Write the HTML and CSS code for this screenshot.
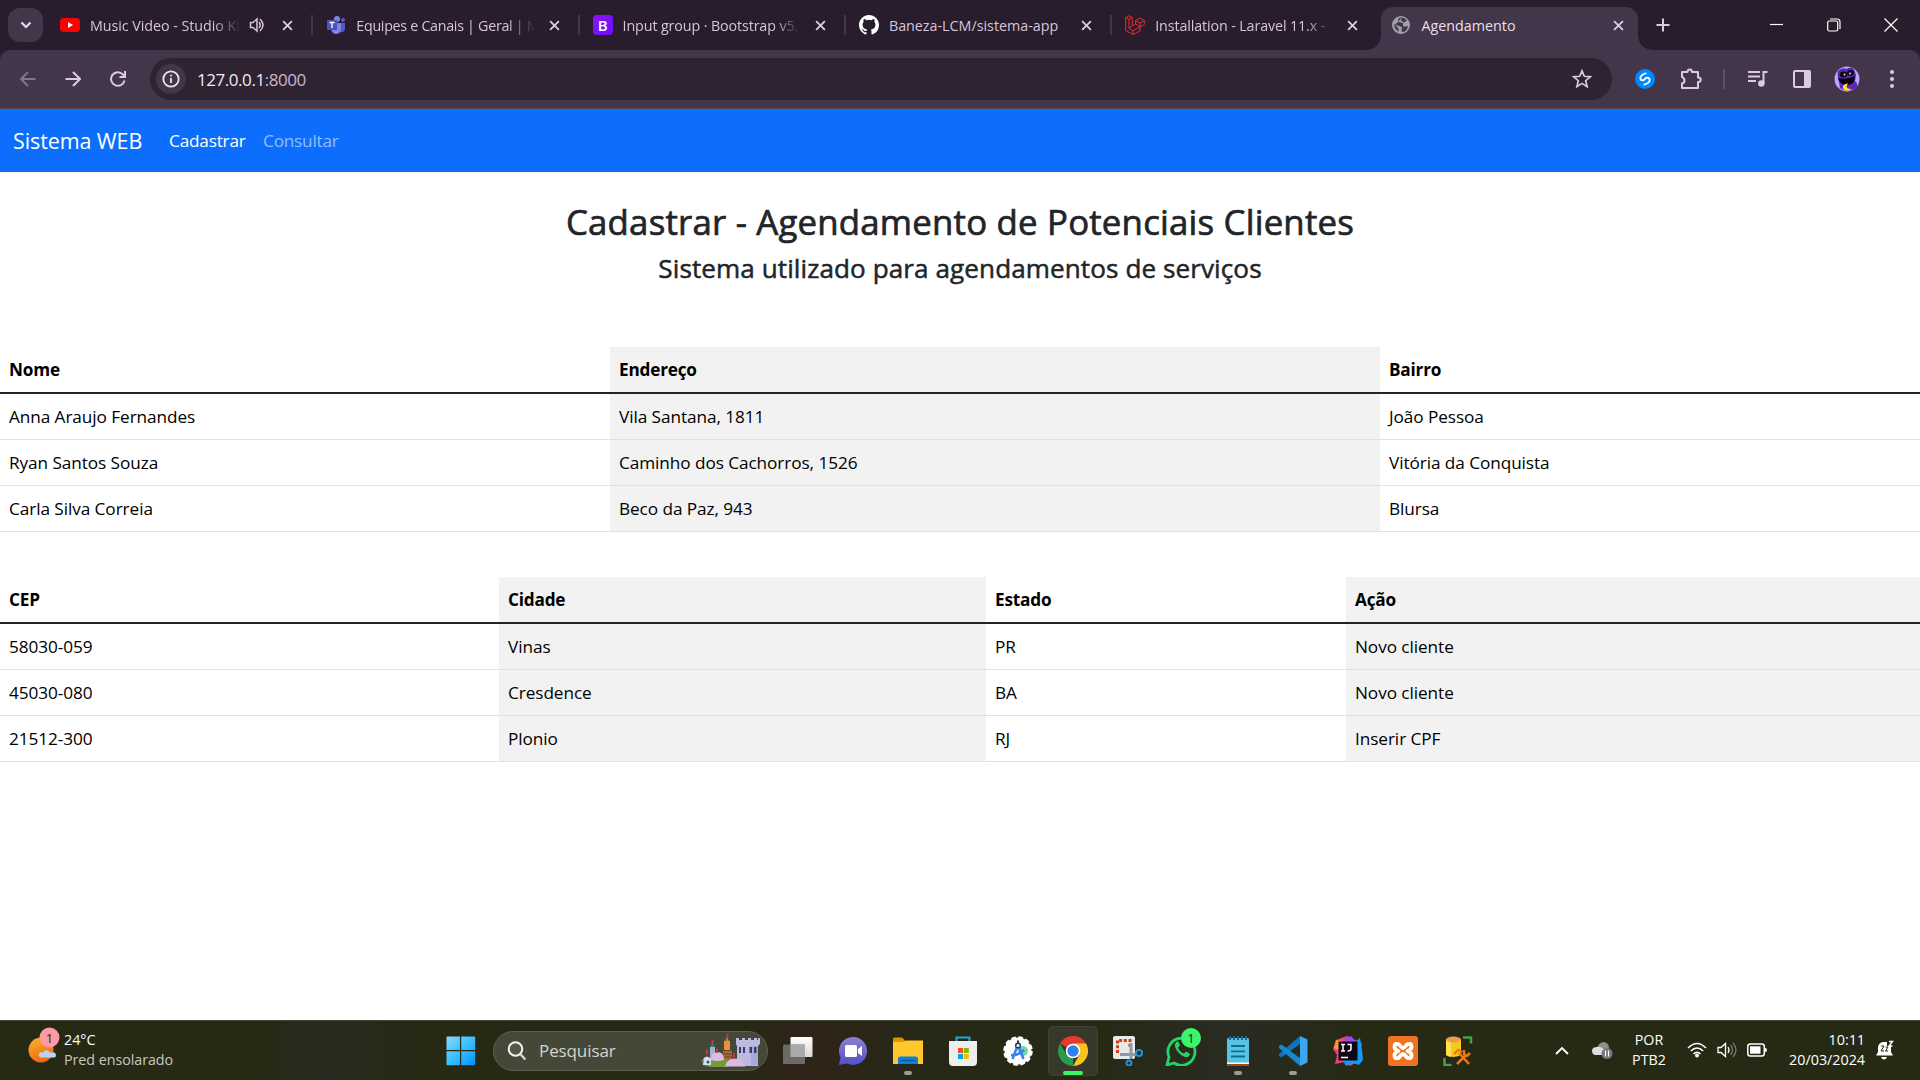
FILE: index.html
```html
<!DOCTYPE html>
<html lang="pt-BR">
<head>
<meta charset="utf-8">
<title>Agendamento</title>
<link rel="stylesheet" href="styles.css">
</head>
<body>
<div class="screen">
  <header class="tabstrip">
    <button class="tab-search"><svg width="12" height="8" viewBox="0 0 12 8"><path d="M1.5 1.5 6 6l4.500-4.500" fill="none" stroke="#e6d9ea" stroke-width="2.200"/></svg></button>
    <div class="tabs">
      <div class="tab">
        <svg class="fav" viewBox="0 0 20 20"><rect y="3" width="20" height="14" rx="4" fill="#f00"/><path d="M8 7v6l5-3z" fill="#fff"/></svg>
        <span class="tab-title short">Music Video - Studio Ki</span>
        <svg class="audio" viewBox="0 0 16 16"><path d="M1.500 5.500v5H4l4 3.500V2L4 5.500z" fill="none" stroke="#d6c5da" stroke-width="1.500"/><path d="M10 5q2.500 3 0 6M11 2q6 6 0 12" fill="none" stroke="#d6c5da" stroke-width="1.500"/></svg>
        <svg class="close" viewBox="0 0 10 10"><path d="m1 1 8 8M9 1 1 9"/></svg>
      </div>
      <div class="tab">
        <svg class="fav" viewBox="0 0 20 20"><circle cx="11" cy="4" r="3" fill="#7b83eb"/><circle cx="17" cy="5" r="2" fill="#5059c9"/><path d="M13 8h6v6q-1 4-5 3z" fill="#5059c9"/><path d="M5 8h10v7q-1 4-5 4t-5-5z" fill="#7b83eb"/><rect x="1" y="5" width="10" height="10" rx="1" fill="#4b53bc"/><path d="M3.500 7.500h5M6 7.500V13" stroke="#fff" stroke-width="1.300"/></svg>
        <span class="tab-title tight">Equipes e Canais | Geral | M</span>
        <svg class="close" viewBox="0 0 10 10"><path d="m1 1 8 8M9 1 1 9"/></svg>
      </div>
      <div class="tab">
        <span class="fav boot">B</span>
        <span class="tab-title">Input group · Bootstrap v5.</span>
        <svg class="close" viewBox="0 0 10 10"><path d="m1 1 8 8M9 1 1 9"/></svg>
      </div>
      <div class="tab">
        <svg class="fav" viewBox="0 0 16 16"><path fill="#fff" d="M8 0C3.580 0 0 3.580 0 8c0 3.540 2.290 6.530 5.470 7.590.4.070.550-.170.550-.380 0-.190-.010-.820-.010-1.490-2.010.370-2.530-.490-2.690-.940-.090-.230-.480-.940-.820-1.130-.280-.150-.680-.520-.010-.530.630-.010 1.080.580 1.230.820.720 1.210 1.870.870 2.330.660.070-.520.280-.870.510-1.070-1.780-.200-3.640-.890-3.640-3.950 0-.870.310-1.590.820-2.150-.080-.200-.360-1.020.080-2.120 0 0 .670-.210 2.200.820a7.500 7.500 0 0 1 4 0c1.530-1.040 2.200-.820 2.200-.820.440 1.100.160 1.920.080 2.120.510.560.820 1.270.820 2.150 0 3.070-1.870 3.750-3.650 3.950.290.250.540.730.540 1.480 0 1.070-.010 1.930-.010 2.200 0 .210.150.460.550.380A8.010 8.010 0 0 0 16 8c0-4.420-3.580-8-8-8"/></svg>
        <span class="tab-title whole">Baneza-LCM/sistema-app</span>
        <svg class="close" viewBox="0 0 10 10"><path d="m1 1 8 8M9 1 1 9"/></svg>
      </div>
      <div class="tab">
        <svg class="fav" viewBox="0 0 20 20" fill="none" stroke="#e0302a" stroke-width="1"><path d="M.700 2.500 4 .700l3.300 1.800v8.300l3.300-1.900V5.500L15 3l4.300 2.500v4L15 12v4l-7 3.500-7.300-4zM.700 2.500 4 4.300l3.300-1.800M4 4.300v9.200l4 2.300 7-4M8 15.800v3.700M10.600 5.500 15 8l4.300-2.500M15 8v4M10.600 9 15 12M4 13.500l3.300-2.700"/></svg>
        <span class="tab-title">Installation - Laravel 11.x -</span>
        <svg class="close" viewBox="0 0 10 10"><path d="m1 1 8 8M9 1 1 9"/></svg>
      </div>
      <div class="tab active">
        <svg class="fav" viewBox="0 0 20 20"><circle cx="10" cy="10" r="9" fill="#9aa0a6"/><path d="M11 2.500q-4 0-4 2.500t3 2.500 2 2.500 5 1q-1 6-6 6-1-2 0-3.500T8 11 3 9q0 5 4.500 7.500v-3L4 10M11 2.500q3 .500 5 3l-3 2-3-2z" fill="#43364a"/></svg>
        <span class="tab-title whole">Agendamento</span>
        <svg class="close" viewBox="0 0 10 10"><path d="m1 1 8 8M9 1 1 9"/></svg>
      </div>
    </div>
    <svg class="new-tab" viewBox="0 0 14 14"><path d="M7 .500v13M.500 7h13" stroke="#dccbe0" stroke-width="2"/></svg>
    <div class="window-controls">
      <svg viewBox="0 0 14 14"><path d="M0 6.500h13"/></svg>
      <svg viewBox="0 0 14 14"><rect x=".700" y="3" width="10" height="10" rx="1.500"/><path d="M3 1h7q3 0 3 3v7"/></svg>
      <svg viewBox="0 0 14 14"><path d="m.500.500 13 13M13.500.500l-13 13"/></svg>
    </div>
  </header>

  <div class="toolbar-back">
  <div class="toolbar">
    <div class="nav-buttons">
      <svg viewBox="0 0 16 16" stroke="#83758a"><path d="M15.500 8H1.500M8 1 1 8l7 7"/></svg>
      <svg viewBox="0 0 16 16" stroke="#dccbe0"><path d="M.500 8h14M8 1l7 7-7 7"/></svg>
      <svg viewBox="0 0 16 16" stroke="#dccbe0"><path d="M14.500 9.500A6.800 6.800 0 1 1 13 3.500l1.500 2M15 0v6H9.500"/></svg>
    </div>
    <div class="omnibox">
      <span class="site-info"><svg width="18" height="18" viewBox="0 0 18 18"><circle cx="9" cy="9" r="7.700" fill="none" stroke="#efe3f2" stroke-width="1.800"/><path d="M9 8v5M9 4.800v1.800" stroke="#efe3f2" stroke-width="1.800"/></svg></span>
      <span class="url"><b>127.0.0.1</b>:8000</span>
      <svg class="star" viewBox="0 0 20 20"><path d="m10 1.800 2.300 5.500 6 .500-4.600 3.900 1.400 5.900-5.100-3.200-5.100 3.200 1.400-5.900L1.700 7.800l6-.500z" fill="none" stroke="#dccbe0" stroke-width="1.700"/></svg>
    </div>
    <div class="extensions">
      <svg class="shazam" width="20" height="20" viewBox="0 0 20 20"><circle cx="10" cy="10" r="10" fill="#08f"/><path d="M10.800 4.300Q5.500 6 5.300 8.700 5.300 11.300 8 11.300q1.700-.300 2.800-2.200M9.200 15.700q5.300-1.700 5.500-4.400 0-2.600-2.700-2.600-1.700.300-2.800 2.200" fill="none" stroke="#fff" stroke-width="1.800" stroke-linecap="round"/></svg>
      <svg class="puzzle" width="22" height="22" viewBox="0 0 22 22"><path d="M2 4h5.500q0-2.500 2.200-2.500T12 4h6v5.500q2.700 0 2.700 2.300T18 14v6H2v-4.500q2.500-.500 2.500-3T2 9z" fill="none" stroke="#dccbe0" stroke-width="2" stroke-linejoin="round"/></svg>
      <span class="divider"></span>
      <svg class="media" width="22" height="18" viewBox="0 0 22 18"><path d="M1 2h12M1 6.500h12M1 11h8M20.500 2H16.500v12" fill="none" stroke="#dccbe0" stroke-width="2"/><circle cx="14.300" cy="13.500" r="3.200" fill="#dccbe0"/></svg>
      <svg class="panel" width="20" height="20" viewBox="0 0 20 20"><rect x="2" y="2" width="16" height="16" rx="1" fill="none" stroke="#dccbe0" stroke-width="2"/><path d="M12 2h6v16h-6z" fill="#dccbe0"/></svg>
      <svg class="avatar" width="26" height="26" viewBox="0 0 26 26"><circle cx="13" cy="13" r="12.500" fill="#c3a2fa"/><path d="M4 5q4-4 8-2 5-3 8 0l2 6-1 6q3 2 2 6-9 7-17 1l-1-6Q3 11 4 5z" fill="#5a28b8"/><ellipse cx="9.500" cy="8.500" rx="3.800" ry="3" fill="#100819"/><ellipse cx="16.500" cy="7" rx="3.500" ry="3" fill="#100819"/><circle cx="10.500" cy="8.500" r="1" fill="#ddd"/><circle cx="16" cy="7.500" r="1" fill="#ddd"/><path d="M4 12q9 2 17-2 0 9-8 9-7 0-9-7z" fill="#05010a"/><path d="M13 17.500q-5 1-4 5 2 3 6 2 2-1 2-2-3 1-4-1t1-4z" fill="#ffe119"/></svg>
      <svg class="dots" width="6" height="20" viewBox="0 0 6 20" fill="#dccbe0"><circle cx="3" cy="3" r="2"/><circle cx="3" cy="10" r="2"/><circle cx="3" cy="17" r="2"/></svg>
    </div>
  </div>
  </div>

  <main class="page">
    <nav class="navbar">
      <a class="brand">Sistema WEB</a>
      <a class="nav-link">Cadastrar</a>
      <a class="nav-link muted">Consultar</a>
    </nav>
    <section class="titles">
      <h1>Cadastrar - Agendamento de Potenciais Clientes</h1>
      <h2>Sistema utilizado para agendamentos de serviços</h2>
    </section>
    <table class="table clients">
      <colgroup><col class="c-name"><col class="c-address"><col></colgroup>
      <thead><tr><th>Nome</th><th>Endereço</th><th>Bairro</th></tr></thead>
      <tbody>
        <tr><td>Anna Araujo Fernandes</td><td>Vila Santana, 1811</td><td>João Pessoa</td></tr>
        <tr><td>Ryan Santos Souza</td><td>Caminho dos Cachorros, 1526</td><td>Vitória da Conquista</td></tr>
        <tr><td>Carla Silva Correia</td><td>Beco da Paz, 943</td><td>Blursa</td></tr>
      </tbody>
    </table>
    <table class="table places">
      <colgroup><col class="c-cep"><col class="c-city"><col class="c-state"><col></colgroup>
      <thead><tr><th>CEP</th><th>Cidade</th><th>Estado</th><th>Ação</th></tr></thead>
      <tbody>
        <tr><td>58030-059</td><td>Vinas</td><td>PR</td><td>Novo cliente</td></tr>
        <tr><td>45030-080</td><td>Cresdence</td><td>BA</td><td>Novo cliente</td></tr>
        <tr><td>21512-300</td><td>Plonio</td><td>RJ</td><td>Inserir CPF</td></tr>
      </tbody>
    </table>
  </main>

  <footer class="taskbar">
    <div class="weather">
      <svg width="34" height="38" viewBox="0 0 34 38"><defs><linearGradient id="sun" x2=".4" y2="1"><stop stop-color="#f8b62c"/><stop offset="1" stop-color="#f06a10"/></linearGradient></defs><circle cx="14" cy="23" r="12.500" fill="url(#sun)"/><path d="M14 30.500q-3-1-2-4 2-2 4-1 3-5 7 0 6-1 6 3 0 2-3 2z" fill="#b9d3f8"/><circle cx="22.500" cy="10.500" r="10" fill="#ff99a4"/><text x="22.500" y="15.500" text-anchor="middle" class="badge-text">1</text></svg>
      <div class="weather-text"><span>24°C</span><span class="dim">Pred ensolarado</span></div>
    </div>
    <div class="apps">
      <svg class="start" width="30" height="30" viewBox="0 0 30 30"><defs><linearGradient id="win" x2="1" y2="1"><stop stop-color="#83dcff"/><stop offset=".5" stop-color="#3cc0ff"/><stop offset="1" stop-color="#0090ff"/></linearGradient></defs><path d="M.500 1.500q0-1 1-1H14V14H.500zM15.200.500h13q1 0 1 1V14h-14zM.500 15.200H14v14H1.500q-1 0-1-1zM15.200 15.200h14v13q0 1-1 1h-13z" fill="url(#win)"/></svg>
      <div class="search">
        <svg class="lens" width="20" height="20" viewBox="0 0 20 20"><circle cx="8.500" cy="8" r="6.800" fill="#555847" stroke="#f2f2f2" stroke-width="2"/><path d="m13.300 13 5 5.500" stroke="#ddd" stroke-width="2.200"/></svg>
        <span>Pesquisar</span>
        <svg class="castle" width="60" height="34" viewBox="0 0 60 34"><path d="M9 13h5v14H9z" fill="#9fb6cf"/><path d="m9 13 2.500-4 2.500 4z" fill="#4a6b90"/><path d="M22 16h9v10h-9z" fill="#a46a3c"/><path d="M23 7h6v9h-6z" fill="#e0953c"/><path d="m24 7 2-4 2 4z" fill="#c97a35"/><path d="M22 16.500h9M22 20h9M22 23h9" stroke="#6d3d2c"/><path d="M2 31q8-7 20-6 9 0 10 6l-8 2H9z" fill="#779b37"/><path d="M10 26q0-8 6.500-8t6.500 8q-6 2-13 0z" fill="#d9bde4"/><path d="M2 31v-6q4-5 8 0v6z" fill="#d5e1ed"/><path d="M0 27l3-2v4z" fill="#7ca83e"/><path d="M35 4h3v2h3V4h3v2h3V4h3v2h3V4h3v2h1V4h2v6l-2 2v20H36V12l-1-2z" fill="#bdb9e0"/><path d="M50 12h7v19h-7z" fill="#aaa8da"/><path d="M38 13h2v6h-2zM42 13h2v6h-2zM48.500 13h2.500v6h-2.500zM53 13h2.500v6H53z" fill="#34406a"/><path d="M24 32.500q2-8 10-8t10 8z" fill="#d9bbe2"/><path d="M11.500 6v4M26.500 0v4M6 15.500v5M16 15v4M33 19v6" stroke="#c93450" stroke-width="2"/><circle cx="7" cy="28" r="1.500" fill="#285870"/></svg>
      </div>
      <div class="app"><svg viewBox="0 0 30 30"><defs><linearGradient id="tv" x2="0" y2="1"><stop stop-color="#fff"/><stop offset="1" stop-color="#d8d8d8"/></linearGradient></defs><rect x="7.500" y="1" width="22" height="20" rx="1" fill="url(#tv)"/><rect y="8.500" width="22" height="19.500" rx="1" fill="#777" fill-opacity=".85"/><path d="M7.500 8.500H22V21H7.500z" fill="#aaa"/></svg></div>
      <div class="app"><svg viewBox="0 0 30 30"><defs><linearGradient id="chat" x2="0" y2="1"><stop stop-color="#8d81cf"/><stop offset="1" stop-color="#4f52c8"/></linearGradient></defs><path d="M15 1a14 14 0 1 1-6 26.600L1 29l1.500-7.500A14 14 0 0 1 15 1z" fill="url(#chat)"/><rect x="7" y="9" width="12" height="12" rx="1.500" fill="#fff"/><path d="m20 13 4-3v10l-4-3z" fill="#fff"/></svg></div>
      <div class="app"><svg viewBox="0 0 30 30"><path d="M0 3q0-1.500 1.500-1.500H9l3 3V8H0z" fill="#dc9600"/><path d="M0 6h10l3-1.500h17V28H0z" fill="#ffc62e"/><path d="M5 28v-5q0-2.500 2.500-2.500h15q2.500 0 2.500 2.500v5z" fill="#0e7fd6"/><path d="M8 24.500h14" stroke="#07529a"/></svg><i class="run"></i></div>
      <div class="app"><svg viewBox="0 0 30 30"><path d="M8.500 7V1.500h13V7" fill="none" stroke="#1fa8e0" stroke-width="2"/><path d="M1 5h28v21q0 4-4 4H5q-4 0-4-4z" fill="#eee"/><path d="M10 12h5v5h-5z" fill="#f25022"/><path d="M15.800 12h5v5h-5z" fill="#7fba00"/><path d="M10 18h5v5h-5z" fill="#00a4ef"/><path d="M15.800 18h5v5h-5z" fill="#ffb900"/></svg></div>
      <div class="app"><svg viewBox="0 0 30 30"><circle cx="15" cy="15" r="13.500" fill="#fff"/><circle cx="15" cy="15" r="13.500" fill="none" stroke="#fff" stroke-width="2.500" stroke-dasharray="4.500 2.570"/><circle cx="20" cy="15" r="5" fill="#6fdc9c"/><path d="m14.500 10-5 13M15.500 10l5 13M8 19q7 1 13-5" fill="none" stroke="#3f7fee" stroke-width="2.600"/><circle cx="15" cy="9.500" r="2.300" fill="#fff" stroke="#203a5c" stroke-width="1.500"/><path d="M15 4.500v3" stroke="#203a5c" stroke-width="2"/></svg></div>
      <div class="app current"><svg viewBox="0 0 30 30"><path d="M15 15 2.010 7.500A15 15 0 0 1 28 7.500z" fill="#e33b2e"/><path d="M2.010 7.500 8.500 18.800l6.500 3.700L15 30A15 15 0 0 1 2.010 7.500z" fill="#2b9a4a"/><path d="m21.500 18.800-6.500 11.200A15 15 0 0 0 28 7.500H15z" fill="#fcc31e"/><circle cx="15" cy="15" r="7.300" fill="#fff"/><circle cx="15" cy="15" r="5.700" fill="#2f7ff0"/></svg><i class="run on"></i></div>
      <div class="app"><svg viewBox="0 0 30 30"><rect y="0" width="22" height="23" rx="2" fill="#e9e9e9"/><path d="M4.500 17V4.500H17V11" fill="none" stroke="#d83b10" stroke-width="3" stroke-dasharray="3 1.700"/><path d="M18 7v16M7 18.500h16" stroke="#8d9aa8" stroke-width="3"/><circle cx="26" cy="17" r="3" fill="none" stroke="#1e93dc" stroke-width="2"/><circle cx="16" cy="27" r="2.500" fill="none" stroke="#1e93dc" stroke-width="2"/></svg></div>
      <div class="app wide"><svg width="38" height="38" viewBox="0 0 38 38"><path d="M3 37l2-8A13.500 13.500 0 1 1 10 35z" fill="none" stroke="#25d366" stroke-width="2.800"/><path d="M11 16q-1 3 3 8 5 6 10 5 3-2 1-4l-3-1.500-2 2q-4-1-6-6l2-2-1.500-4Q12 13 11 16z" fill="#25d366"/><circle cx="27" cy="10" r="10" fill="#3bf56b"/><text x="27" y="15" text-anchor="middle" class="badge-text">1</text></svg></div>
      <div class="app"><svg viewBox="0 0 30 30"><rect x="4" y="2" width="22" height="28" rx="1.500" fill="#58c4e4"/><path d="M4 26.500h22V28H4z" fill="#fff"/><path d="M4 28h22v2H4z" fill="#a44a12"/><path d="M7 0v4M11 0v4M15 0v4M19 0v4M23 0v4" stroke="#176a94" stroke-width="2"/><path d="M8 10h14M8 15.300h14M8 20.500h14" stroke="#0b6f98" stroke-width="1.800"/></svg><i class="run"></i></div>
      <div class="app"><svg viewBox="0 0 30 30"><path d="M22 8 3.500 21.500 1 20v-2L22 0z" fill="#0f72bb"/><path d="M22 22 3.500 8.500 1 10v2l21 18z" fill="#1787d0"/><path d="m22 0 7.500 3.500v23L22 30z" fill="#3ba7ef"/></svg><i class="run"></i></div>
      <div class="app"><svg viewBox="0 0 30 30"><path d="M3 4 14 0l8 4 7 3-2 9 2 7-12 7-5-4-10 2 2-9-4-6z" fill="#f33d83"/><path d="m22 6 5-4 2 12 1 10-4 5-6-2-7 3-3-5z" fill="#1599f2"/><path d="M3 4l7 1-5 9-4-2z" fill="#fb9b27"/><path d="M12 2l6-2 4 5H12z" fill="#8f4df0"/><rect x="5.500" y="5.500" width="19" height="19" fill="#100816"/><path d="M8 8.500h4M10 8.500V15M8 15h4M14.500 8.500H18V13q0 2-3.500 2M8 21.500h7" fill="none" stroke="#fff" stroke-width="1.500"/></svg></div>
      <div class="app"><svg viewBox="0 0 30 30"><rect width="30" height="30" rx="3" fill="#f07322"/><path d="M11 8.500Q7 6.500 6.500 10t4 5q-4.500 1.500-4 5t4.500 1.500Q14 18 15 18t4 3.500q4 2 4.500-1.500t-4-5q4.500-1.500 4-5T19 8.500Q16 12 15 12t-4-3.500z" fill="none" stroke="#fff" stroke-width="3.800" stroke-linejoin="round"/></svg></div>
      <div class="app"><svg viewBox="0 0 30 30"><path d="M3 3v16q7 4 15 0V3z" fill="#f7c918"/><path d="M3 3v16q2 1.500 5 1.800V3z" fill="#ffe04d"/><ellipse cx="10.500" cy="3.500" rx="7.500" ry="3" fill="#ec9f4a"/><path d="M20 1.500h8v6M1.500 22v7h7" fill="none" stroke="#46a049" stroke-width="2.500"/><path d="m14 28 9-9M16 17l10 11M11 18l4-4 4 2M21 14v4l3 2 3-3" fill="none" stroke="#ef7a12" stroke-width="2.500"/></svg></div>
    </div>
    <div class="tray">
      <svg width="14" height="9" viewBox="0 0 14 9"><path d="m1 8 6-6 6 6" fill="none" stroke="#fff" stroke-width="1.800"/></svg>
      <svg class="cloud" width="21" height="18" viewBox="0 0 21 18"><path d="M5 7q2-6 7-6 5 1 5 6l-2 6H5z" fill="#8c8e85"/><path d="M0 10q0-4 5-4 4-1 8 3l-3 5H3q-3-1-3-4z" fill="#ddd"/><circle cx="15" cy="12.500" r="5.500" fill="#74777c"/><path d="M13.500 9.500v6M16.500 9.500v6" stroke="#fff" stroke-width="1.200"/></svg>
      <div class="lang"><span>POR</span><span>PTB2</span></div>
      <svg class="wifi" width="20" height="16" viewBox="0 0 20 16"><path d="M1 6q9-9 18 0M3.800 9q6.200-6 12.400 0M6.500 12q3.500-3.500 7 0" fill="none" stroke="#fff" stroke-width="1.500"/><circle cx="10" cy="13.500" r="1.900" fill="#fff"/></svg>
      <svg class="vol" width="20" height="16" viewBox="0 0 20 16"><path d="M1 5.500v5h3l4.500 4v-13L4 5.500z" fill="none" stroke="#fff" stroke-width="1.300"/><path d="M11 5q2 3 0 6" fill="none" stroke="#fff" stroke-width="1.300"/><path d="M13.500 3q4 5 0 10M16 1q6 7 0 14" fill="none" stroke="#777a6b" stroke-width="1.300"/></svg>
      <svg class="batt" width="20" height="14" viewBox="0 0 20 14"><rect x=".800" y="1" width="16.500" height="12" rx="2.500" fill="none" stroke="#fff" stroke-width="1.500"/><rect x="3" y="3.300" width="10.500" height="7.400" fill="#fff"/><path d="M18 5q2 0 2 2t-2 2z" fill="#fff"/></svg>
      <div class="clock"><span>10:11</span><span>20/03/2024</span></div>
      <svg class="bell" width="18" height="20" viewBox="0 0 18 20"><path d="M0 15.500 2 12V7q1-5 6-5h3v4h4v6l2 3.500zM5 17h6q-1 2.500-3 2.500T5 17z" fill="#fff"/><path d="M5 6h3l-3 5h3M9.500 7h2.500l-2.500 4H12" fill="none" stroke="#262818" stroke-width="1"/><path d="M13 1.500h3.500L13 6h3.500" fill="none" stroke="#fff" stroke-width="1.400"/></svg>
    </div>
  </footer>
</div>
</body>
</html>
```
FILE: styles.css
```css
* { box-sizing: border-box; }
body { margin: 0; background: #fff; font-family: "Open Sans", "Noto Sans", sans-serif; }
svg { display: block; flex: none; }
button { border: 0; padding: 0; }
.screen { width: 1920px; height: 1080px; display: flex; flex-direction: column; overflow: hidden; }

/* Browser tab strip */
.tabstrip { height: 50px; flex: none; display: flex; align-items: center; background: #281c2d; padding-left: 8px; }
.tab-search { width: 35px; height: 34px; border-radius: 12px; background: #43364a; display: flex; align-items: center; justify-content: center; }
.tabs { display: flex; align-self: stretch; margin-left: 4px; }
.tab { width: 266.300px; display: flex; align-items: center; padding: 0 20px 0 13px; position: relative; color: #d6c5da; font-size: 14.300px; }
.tab:nth-child(-n+4)::after { content: ""; position: absolute; right: 0; top: 15px; width: 2px; height: 20px; background: #43364a; }
.fav { width: 20px; height: 20px; flex: none; }
.boot { display: flex; align-items: center; justify-content: center; border-radius: 4px; background: linear-gradient(135deg, #9013fe, #6610f2); color: #fff; font-weight: 600; font-size: 15px; }
.tab-title { flex: 1; margin-left: 10px; overflow: hidden; white-space: nowrap; margin-right: 14px; letter-spacing: -.12px; mask-image: linear-gradient(to right, #000 calc(100% - 28px), transparent); }
.tab-title.short { margin-right: 8px; letter-spacing: -.05px; }
.tab-title.tight { letter-spacing: -.3px; }
.tab-title.whole { mask-image: none; letter-spacing: 0; }
.audio { width: 16px; height: 16px; margin-right: 17px; }
.close { width: 11px; height: 11px; fill: none; stroke: #dccbe0; stroke-width: 1.700; }
.tab.active { width: 257px; height: 43px; margin: 7px 0 0 3px; padding: 0 14px 7px 10px; background: #43364a; border-radius: 12px 12px 0 0; color: #eadfee; }
.tab.active::before, .tab.active::after { content: ""; position: absolute; bottom: 0; width: 14px; height: 14px; }
.tab.active::before { left: -14px; background: radial-gradient(circle at 0 0, transparent 13.500px, #43364a 14px); }
.tab.active::after { right: -14px; background: radial-gradient(circle at 100% 0, transparent 13.500px, #43364a 14px); }
.new-tab { width: 14px; height: 14px; margin-left: 18px; }
.window-controls { margin-left: auto; display: flex; gap: 43px; padding-right: 22px; }
.window-controls svg { width: 14px; height: 14px; fill: none; stroke: #fff; stroke-width: 1.200; }

/* Toolbar */
.toolbar-back { flex: none; background: #281c2d; }
.toolbar { height: 59px; display: flex; align-items: center; background: #43364a; border-bottom: 1px solid #544a5a; border-radius: 10px 10px 0 0; }
.nav-buttons { display: flex; gap: 29px; padding-left: 20px; width: 150px; }
.nav-buttons svg { width: 16px; height: 16px; fill: none; stroke-width: 2; }
.omnibox { width: 1462px; height: 42px; border-radius: 21px; background: #2e2233; display: flex; align-items: center; padding: 0 20px 0 6px; }
.site-info { width: 30px; height: 30px; border-radius: 50%; background: #43364a; display: flex; align-items: center; justify-content: center; }
.url { margin-left: 11px; font-size: 17px; color: #c9b8cd; letter-spacing: -.450px; }
.url b { font-weight: 400; color: #f3eaf5; }
.star { width: 20px; height: 20px; margin-left: auto; }
.extensions { display: flex; align-items: center; flex: 1; padding-left: 23px; }
.puzzle { margin-left: 25px; }
.divider { width: 2px; height: 20px; background: #5d5063; margin: 0 22px 0 21px; }
.panel { margin-left: 23px; }
.avatar { margin-left: 22px; }
.dots { margin-left: 29px; }

/* Web page */
.page { height: 911px; flex: none; background: #fff; color: #000; font-size: 17.200px; }
.navbar { height: 63px; background: #0d6efd; display: flex; align-items: center; padding-left: 13px; color: #fff; }
.brand { font-size: 21.500px; width: 156px; white-space: nowrap; letter-spacing: -.1px; }
.nav-link { width: 94px; letter-spacing: -.2px; }
.muted { color: #91bffe; }
.titles { height: 175px; padding-top: 28px; text-align: center; color: #212529; }
h1, h2 { margin: 0; font-weight: 400; white-space: nowrap; }
h1 { font-size: 34.800px; line-height: 43px; margin-bottom: 9px; letter-spacing: .2px; -webkit-text-stroke: .700px #212529; }
h2 { font-size: 26.100px; line-height: 32px; letter-spacing: .080px; -webkit-text-stroke: .500px #212529; }
.table { width: 100%; table-layout: fixed; border-collapse: separate; border-spacing: 0; text-align: left; }
.table th, .table td { padding: 0 9px; height: 46px; border-bottom: 1px solid #dee2e6; white-space: nowrap; line-height: 27px; letter-spacing: -.070px; }
.table th { height: 47px; font-weight: 700; border-bottom: 2px solid #212529; letter-spacing: -.2px; }
.table th:nth-child(even), .table td:nth-child(even) { background: #f2f2f2; }
.places { margin-top: 45px; }
.c-name { width: 610px; }
.c-address { width: 770px; }
.c-cep { width: 499px; }
.c-city { width: 487px; }
.c-state { width: 360px; }

/* Taskbar */
.taskbar { height: 60px; flex: none; display: flex; background: linear-gradient(90deg, #262a15 0, #262a15 260px, #292a20 320px, #262a15 420px, #262a15 720px, #2f2318 800px, #262817 920px, #262a15 1100px, #2a2b22 1230px, #262a15 1350px); border-top: 1px solid #41443a; color: #fff; font-size: 14.300px; }
.weather { width: 446px; display: flex; padding: 7px 0 0 26px; }
.weather-text { display: flex; flex-direction: column; margin-left: 4px; line-height: 20px; padding-top: 2px; white-space: nowrap; }
.weather > svg { margin: -1px 0 0 1px; }
.weather-text { margin-left: 3px; }
.dim { color: #c6c8bf; letter-spacing: -.050px; }
.badge-text { font-family: "Open Sans", sans-serif; font-size: 13px; fill: #222; }
.apps { display: flex; align-items: center; width: 1044px; }
.search { width: 275px; flex: none; height: 40px; margin: 0 5px 0 17px; border: 1px solid #5d6051; border-radius: 20px; background: #454837; display: flex; align-items: center; padding: 0 6px 0 13px; color: #d3d4ce; font-size: 17px; }
.search span { margin-left: 12px; letter-spacing: -.1px; }
.castle { margin-left: auto; }
.app { width: 50px; flex: none; height: 50px; margin-right: 5px; display: flex; align-items: center; justify-content: center; position: relative; border-radius: 5px; }
.app svg { width: 30px; height: 30px; }
.app.wide svg { width: 38px; height: 38px; margin-top: -7px; }
.current { background: #36382a; border: 1px solid #404334; }
.run { position: absolute; bottom: 1px; left: 21px; width: 8px; height: 4px; border-radius: 2px; background: #9b9c93; }
.run.on { left: 14px; width: 20px; background: #3bf56b; bottom: 0; }
.tray { display: flex; align-items: center; margin-left: auto; padding-right: 26px; }
.tray svg { margin-top: -1px; }
.tray .cloud { margin-left: 23px; }
.lang, .clock { display: flex; flex-direction: column; line-height: 20px; margin-top: -1px; }
.lang { width: 40px; margin-left: 16px; align-items: center; }
.tray .wifi { margin-left: 18px; }
.tray .vol, .tray .batt { margin-left: 10px; }
.clock { width: 82px; margin-left: 16px; align-items: flex-end; }
.tray .bell { margin-left: 11px; }
```
